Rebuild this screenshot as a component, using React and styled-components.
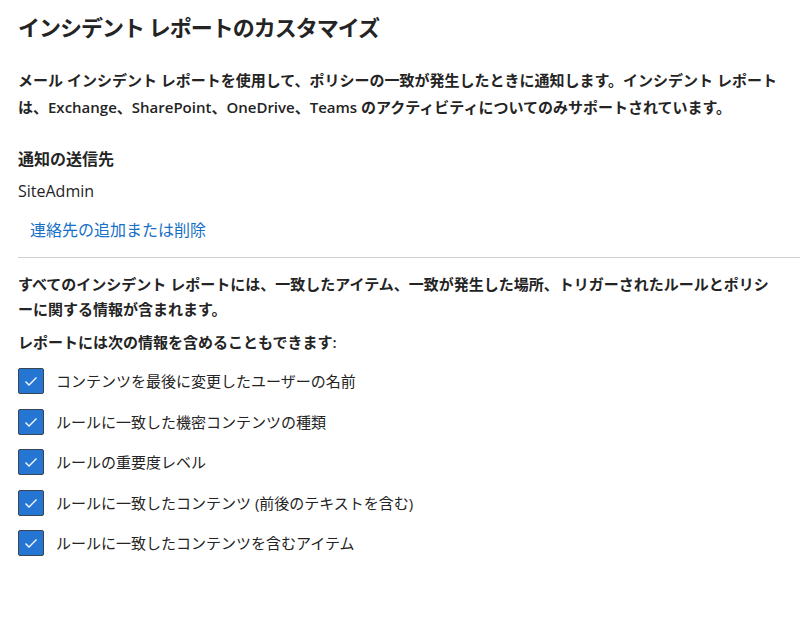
import styled, { createGlobalStyle } from "styled-components";

const GlobalStyle = createGlobalStyle`
  html, body {
    margin: 0;
    padding: 0;
    background: #ffffff;
  }
  body {
    font-family: "Open Sans", "Noto Sans CJK JP", sans-serif;
    color: #242424;
  }
`;

const Page = styled.div`
  width: 800px;
  height: 630px;
  padding: 10px 0 0 18px;
  box-sizing: border-box;
  font-family: "Open Sans", "Noto Sans CJK JP", sans-serif;
`;

const Title = styled.h1`
  margin: 0;
  font-size: 22px;
  font-weight: 600;
  line-height: 34px;
  letter-spacing: -1px;
  color: #242424;
`;

const Lead = styled.p`
  margin: ${(p) => p.$margin || "0"};
  font-size: 15px;
  font-weight: 600;
  line-height: ${(p) => p.$lh || "27px"};
  color: #242424;
`;

const Label = styled.div`
  margin-top: 25px;
  font-size: 16px;
  font-weight: 600;
  line-height: 26px;
`;

const Value = styled.div`
  margin-top: 6px;
  font-size: 16px;
  line-height: 26px;
`;

const Link = styled.a`
  display: inline-block;
  margin: 13px 0 0 12px;
  font-size: 16px;
  line-height: 26px;
  color: #1570c8;
  text-decoration: none;
  cursor: pointer;
`;

const Divider = styled.hr`
  margin: 14px 0 0 0;
  border: 0;
  border-top: 1px solid #d1d1d1;
`;

const List = styled.div`
  display: flex;
  flex-direction: column;
  gap: 14.5px;
  margin-top: 13px;
`;

const Row = styled.label`
  display: flex;
  align-items: center;
  gap: 12px;
  font-size: 15px;
  line-height: 26px;
  cursor: pointer;
`;

const Box = styled.span`
  width: 26px;
  height: 26px;
  box-sizing: border-box;
  border: 1px solid #3a4452;
  border-radius: 2px;
  background: #2476d2;
  display: flex;
  align-items: center;
  justify-content: center;
  flex-shrink: 0;
`;

const items = [
  "コンテンツを最後に変更したユーザーの名前",
  "ルールに一致した機密コンテンツの種類",
  "ルールの重要度レベル",
  "ルールに一致したコンテンツ (前後のテキストを含む)",
  "ルールに一致したコンテンツを含むアイテム",
];

const Check = () => (
  <svg width="16" height="16" viewBox="0 0 16 16">
    <path d="M2.5 8.5 L6 12 L13.5 4.5" fill="none" stroke="#fff" strokeWidth="1.3" />
  </svg>
);

export default function App() {
  return (
    <Page>
      <GlobalStyle />
      <Title>インシデント レポートのカスタマイズ</Title>
      <Lead $margin="23px 0 0 0">
        メール インシデント レポートを使用して、ポリシーの一致が発生したときに通知します。インシデント レポート
        <br />
        は、Exchange、SharePoint、OneDrive、Teams のアクティビティについてのみサポートされています。
      </Lead>
      <Label>通知の送信先</Label>
      <Value>SiteAdmin</Value>
      <Link>連絡先の追加または削除</Link>
      <Divider />
      <Lead $margin="14px 0 0 0" $lh="25px">
        すべてのインシデント レポートには、一致したアイテム、一致が発生した場所、トリガーされたルールとポリシ
        <br />
        ーに関する情報が含まれます。
      </Lead>
      <Lead $margin="8px 0 0 0" $lh="25px">
        レポートには次の情報を含めることもできます:
      </Lead>
      <List>
        {items.map((t) => (
          <Row key={t}>
            <Box>
              <Check />
            </Box>
            {t}
          </Row>
        ))}
      </List>
    </Page>
  );
}
